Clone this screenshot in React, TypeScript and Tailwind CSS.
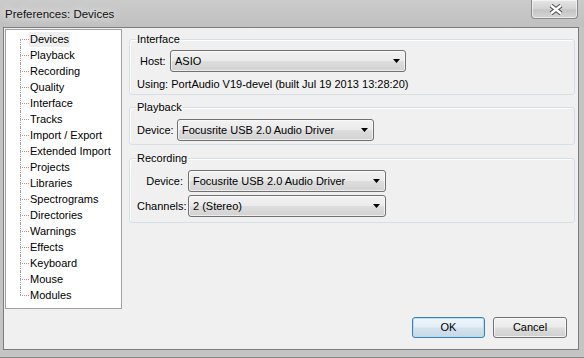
import React from "react";

const treeItems = [
  "Devices",
  "Playback",
  "Recording",
  "Quality",
  "Interface",
  "Tracks",
  "Import / Export",
  "Extended Import",
  "Projects",
  "Libraries",
  "Spectrograms",
  "Directories",
  "Warnings",
  "Effects",
  "Keyboard",
  "Mouse",
  "Modules",
];

function Arrow() {
  return (
    <svg width="7" height="4" viewBox="0 0 7 4" className="shrink-0">
      <polygon points="0,0 7,0 3.5,4" fill="#000" />
    </svg>
  );
}

function Combo({ text, cls }: { text: string; cls: string }) {
  return (
    <div
      className={
        "flex h-[22px] items-center justify-between rounded-[3px] border border-[#707070] bg-[linear-gradient(to_bottom,#f2f2f2,#ebebeb_48%,#dddddd_52%,#d2d2d2)] pl-[4px] pr-[5px] shadow-[inset_0_0_0_1px_rgba(255,255,255,0.6)] " +
        cls
      }
    >
      <span className="leading-[13px]">{text}</span>
      <Arrow />
    </div>
  );
}

function Legend({ children }: { children: React.ReactNode }) {
  return <legend className="ml-[6px] px-[1px] leading-[14px]">{children}</legend>;
}

export default function App() {
  return (
    <div className="flex h-[358px] w-[584px] flex-col overflow-hidden border-b border-[#8a8a8a] bg-[#c4c4c4] font-['Liberation_Sans',Arial,sans-serif] text-[11px] text-black">
      {/* Title bar */}
      <div className="flex h-[27px] shrink-0 items-start bg-[linear-gradient(to_bottom,#cbcbcb,#c0c0c0)]">
        <div className="mt-[6px] pl-[5px] text-[11.5px] leading-[16px] text-[#111] [text-shadow:0_0_6px_#ececec,0_0_10px_#e4e4e4]">
          Preferences: Devices
        </div>
        <div className="ml-auto mr-[6px] flex h-[19px] w-[47px] items-center justify-center rounded-b-[4px] border border-t-0 border-[#8a8a8a] bg-[linear-gradient(to_bottom,#e6e6e6,#d2d2d2_50%,#c4c4c4_55%,#d6d6d6)] shadow-[inset_0_0_0_1px_rgba(255,255,255,0.55)]">
          <svg width="14" height="11" viewBox="0 0 14 11" className="ml-[3px]">
            <path d="M2 1.5 L12 9.5 M12 1.5 L2 9.5" stroke="#4a4a4a" strokeWidth="4.4" fill="none" />
            <path d="M2 1.5 L12 9.5 M12 1.5 L2 9.5" stroke="#ffffff" strokeWidth="2.3" fill="none" />
          </svg>
        </div>
      </div>

      {/* Client area */}
      <div className="ml-[3px] flex h-[323px] w-[576px] shrink-0 flex-col border border-[#7c7c7c] bg-[#f0f0f0]">
        <div className="flex items-start pl-[1px] pt-[1px]">
          {/* Tree */}
          <div className="h-[280px] w-[117px] shrink-0 border border-[#a0a0a0] bg-white pl-[14px] pt-[1px]">
            {treeItems.map((item, i) => {
              const first = i === 0;
              const last = i === treeItems.length - 1;
              return (
                <div key={item} className="flex h-[16px] items-stretch">
                  <div className="flex w-[9px] shrink-0 flex-col">
                    <div className={"h-[8px] " + (first ? "" : "border-l border-dotted border-[#a0a0a0]")} />
                    <div
                      className={
                        "h-[8px] border-t border-dotted border-[#a0a0a0] " +
                        (last ? "" : "border-l")
                      }
                    />
                  </div>
                  <div className="flex items-center">
                    <span
                      className={
                        "whitespace-nowrap px-[1px] leading-[15px] " + (first ? "bg-[#efefef]" : "")
                      }
                    >
                      {item}
                    </span>
                  </div>
                </div>
              );
            })}
          </div>

          {/* Right side */}
          <div className="ml-[7px] flex w-[446px] shrink-0 flex-col pt-[3px]">
            <fieldset className="rounded-[3px] border border-[#d5dfe5] pb-[3px] shadow-[inset_1px_1px_0_#ffffff]">
              <Legend>Interface</Legend>
              <div className="mt-[4px] flex items-center pl-[10px]">
                <span className="w-[30px] shrink-0 leading-[13px]">Host:</span>
                <Combo text="ASIO" cls="w-[236px]" />
              </div>
              <div className="mt-[6px] whitespace-nowrap pl-[7px] leading-[13px]">
                Using: PortAudio V19-devel (built Jul 19 2013 13:28:20)
              </div>
            </fieldset>

            <fieldset className="mt-[5px] rounded-[3px] border border-[#d5dfe5] pb-[3px] shadow-[inset_1px_1px_0_#ffffff]">
              <Legend>Playback</Legend>
              <div className="mt-[5px] flex items-center pl-[7px]">
                <span className="w-[40px] shrink-0 leading-[13px]">Device:</span>
                <Combo text="Focusrite USB 2.0 Audio Driver" cls="w-[197px]" />
              </div>
            </fieldset>

            <fieldset className="mt-[6px] rounded-[3px] border border-[#d5dfe5] pb-[5px] shadow-[inset_1px_1px_0_#ffffff]">
              <Legend>Recording</Legend>
              <div className="mt-[5px] flex items-center pl-[7px]">
                <span className="w-[51px] shrink-0 whitespace-nowrap pr-[5px] text-right leading-[13px]">Device:</span>
                <Combo text="Focusrite USB 2.0 Audio Driver" cls="w-[198px]" />
              </div>
              <div className="mt-[3px] flex items-center pl-[7px]">
                <span className="w-[51px] shrink-0 whitespace-nowrap pr-[5px] leading-[13px]">Channels:</span>
                <Combo text="2 (Stereo)" cls="w-[198px]" />
              </div>
            </fieldset>
          </div>
        </div>

        {/* Buttons */}
        <div className="mt-[8px] flex justify-end gap-[8px] pr-[11px]">
          <button className="flex h-[21px] w-[73px] items-center justify-center rounded-[3px] border border-[#3c7fb1] bg-[linear-gradient(to_bottom,#eef6fb,#e3eef6_48%,#d3e3ee_52%,#c7d9e6)] leading-[13px] shadow-[inset_0_0_0_1px_rgba(180,220,245,0.9)]">
            OK
          </button>
          <button className="flex h-[21px] w-[74px] items-center justify-center rounded-[3px] border border-[#707070] bg-[linear-gradient(to_bottom,#f2f2f2,#ebebeb_48%,#dddddd_52%,#cfcfcf)] leading-[13px] shadow-[inset_0_0_0_1px_rgba(255,255,255,0.7)]">
            Cancel
          </button>
        </div>
      </div>
    </div>
  );
}
